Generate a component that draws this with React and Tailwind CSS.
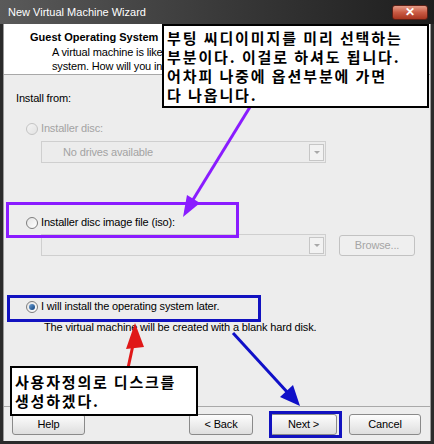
const ui = { fontFamily: '"Liberation Sans", Arial, sans-serif' };
const ko = { fontFamily: '"Noto Sans CJK KR", "Noto Sans", sans-serif' };

function Radio({ checked, disabled }) {
  return (
    <span
      className={
        "relative inline-flex h-[12px] w-[12px] shrink-0 items-center justify-center rounded-full border bg-gradient-to-br " +
        (disabled
          ? "border-[#c4c4c4] from-[#f4f4f4] to-[#e2e2e2]"
          : "border-[#7d7d7d] from-[#e4e4e4] to-[#ffffff]")
      }
    >
      {checked && <span className="h-[6px] w-[6px] rounded-full bg-gradient-to-br from-[#6fa3d8] to-[#0c3f7a]" />}
    </span>
  );
}

function Combo({ text, className }) {
  return (
    <div className={"flex h-[22px] items-center border border-[#cfcfcf] bg-[#ececec] pr-[1px] " + className}>
      <span className="flex-1 pl-[21px] text-[11px] text-[#a3a3a3]">{text}</span>
      <span className="flex h-[17px] w-[15px] items-center justify-center border border-[#c6c6c6] bg-[#f2f2f2]">
        <span className="h-0 w-0 border-x-[3px] border-t-[3px] border-x-transparent border-t-[#a8a8a8]" />
      </span>
    </div>
  );
}

function Btn({ children, className, disabled }) {
  return (
    <div
      className={
        "flex h-[21px] items-center justify-center rounded-[3px] border text-[11px] " +
        (disabled
          ? "border-[#c2c2c2] bg-[#efefef] text-[#a5a5a5] "
          : "border-[#8a8a8a] bg-gradient-to-b from-[#fdfdfd] to-[#dedede] text-black ") +
        className
      }
    >
      {children}
    </div>
  );
}

export default function App() {
  return (
    <div className="relative h-[444px] w-[434px] overflow-hidden bg-[#2b2b2b] tracking-[-0.15px]" style={ui}>
      {/* title bar */}
      <div className="flex h-[24px] items-center bg-gradient-to-r from-[#5a5a5a] via-[#3a3a3a] to-[#1e1e1e] pl-[8px]">
        <span className="text-[11px] tracking-normal text-white">New Virtual Machine Wizard</span>
        <div className="ml-auto mr-[6px] flex h-[15px] w-[36px] items-center justify-center rounded-[3px] border border-[#5a1f16] bg-gradient-to-b from-[#e49a86] via-[#c95a43] to-[#a8351f]">
          <span className="text-[12px] font-bold leading-none text-white">✕</span>
        </div>
      </div>

      <div className="mx-[3px] mb-[3px] flex h-[417px] flex-col border-x border-[#9a9a9a] bg-[#ededed]">
        {/* header (the right part sits under the callout) */}
        <div className="h-[51px] border-b border-[#a8a8a8] bg-white pt-[6px]">
          <div className="w-[158px] overflow-hidden whitespace-nowrap">
            <div className="pl-[26px] text-[11px] font-bold leading-[14px] tracking-normal">Guest Operating System</div>
            <div className="pl-[48px] pt-[1px] text-[11px] leading-[14px]">
              A virtual machine is like
              <br />
              system. How will you in
            </div>
          </div>
        </div>

        {/* body */}
        <div className="flex h-[332px] flex-col border-b border-[#a9a9a9] pt-[17px] text-[11px] leading-[13px]">
          <div className="pl-[12px]">Install from:</div>

          <div className="mt-[17px] flex items-center gap-[3px] pl-[22px] text-[#a3a3a3]">
            <Radio disabled />
            <span>Installer disc:</span>
          </div>
          <Combo text="No drives available" className="ml-[37px] mt-[6px] w-[285px]" />

          <div className="mt-[53px] flex items-center gap-[3px] pl-[22px]">
            <Radio />
            <span>Installer disc image file (iso):</span>
          </div>
          <div className="ml-[37px] mt-[5px] flex items-center gap-[13px]">
            <Combo text="" className="w-[285px]" />
            <Btn disabled className="w-[76px] rounded-[2px]">
              Browse...
            </Btn>
          </div>

          <div className="mt-[44px] flex items-center gap-[3px] pl-[22px]">
            <Radio checked />
            <span>I will install the operating system later.</span>
          </div>
          <div className="mt-[8px] pl-[40px]">The virtual machine will be created with a blank hard disk.</div>
        </div>

        {/* footer */}
        <div className="flex items-center pl-[8px] pt-[7px]">
          <Btn className="w-[73px]">Help</Btn>
          <Btn className="ml-[104px] w-[64px]">&lt; Back</Btn>
          <Btn className="ml-[17px] w-[67px]">Next &gt;</Btn>
          <Btn className="ml-[12px] w-[72px]">Cancel</Btn>
        </div>
      </div>

      {/* annotations */}
      <div className="absolute left-[6px] top-[202px] h-[36px] w-[233px] border-[3px] border-[#8a1cff]" />
      <div className="absolute left-[7px] top-[295px] h-[27px] w-[254px] border-[3px] border-[#1212c0]" />
      <div className="absolute left-[269px] top-[411px] h-[27px] w-[73px] border-[3px] border-[#1212c0]" />

      <svg className="pointer-events-none absolute left-0 top-0" width="434" height="444">
        <line x1="250" y1="107" x2="191" y2="203" stroke="#8a1cff" strokeWidth="3" />
        <polygon points="183,217 200,203 187,195" fill="#8a1cff" />
        <line x1="128" y1="368" x2="133" y2="345" stroke="#e01818" strokeWidth="3" />
        <polygon points="135,323 126,349 144,347" fill="#e01818" />
        <line x1="233" y1="333" x2="288" y2="393" stroke="#1010c8" strokeWidth="3" />
        <polygon points="300,406 293,385 280,397" fill="#1010c8" />
      </svg>

      <div
        className="absolute left-[162px] top-[24px] h-[84px] w-[267px] border-2 border-black bg-white pl-[3px] pt-[2px] text-[15px] font-bold leading-[19px] tracking-[1.9px] text-black"
        style={ko}
      >
        부팅 씨디이미지를 미리 선택하는
        <br />
        부분이다. 이걸로 하셔도 됩니다.
        <br />
        어차피 나중에 옵션부분에 가면
        <br />다 나옵니다.
      </div>

      <div
        className="absolute left-[10px] top-[366px] h-[50px] w-[188px] border-2 border-black bg-white pl-[3px] pt-[4px] text-[15px] font-bold leading-[19px] tracking-[1.8px] text-black"
        style={ko}
      >
        사용자정의로 디스크를
        <br />
        생성하겠다.
      </div>
    </div>
  );
}
